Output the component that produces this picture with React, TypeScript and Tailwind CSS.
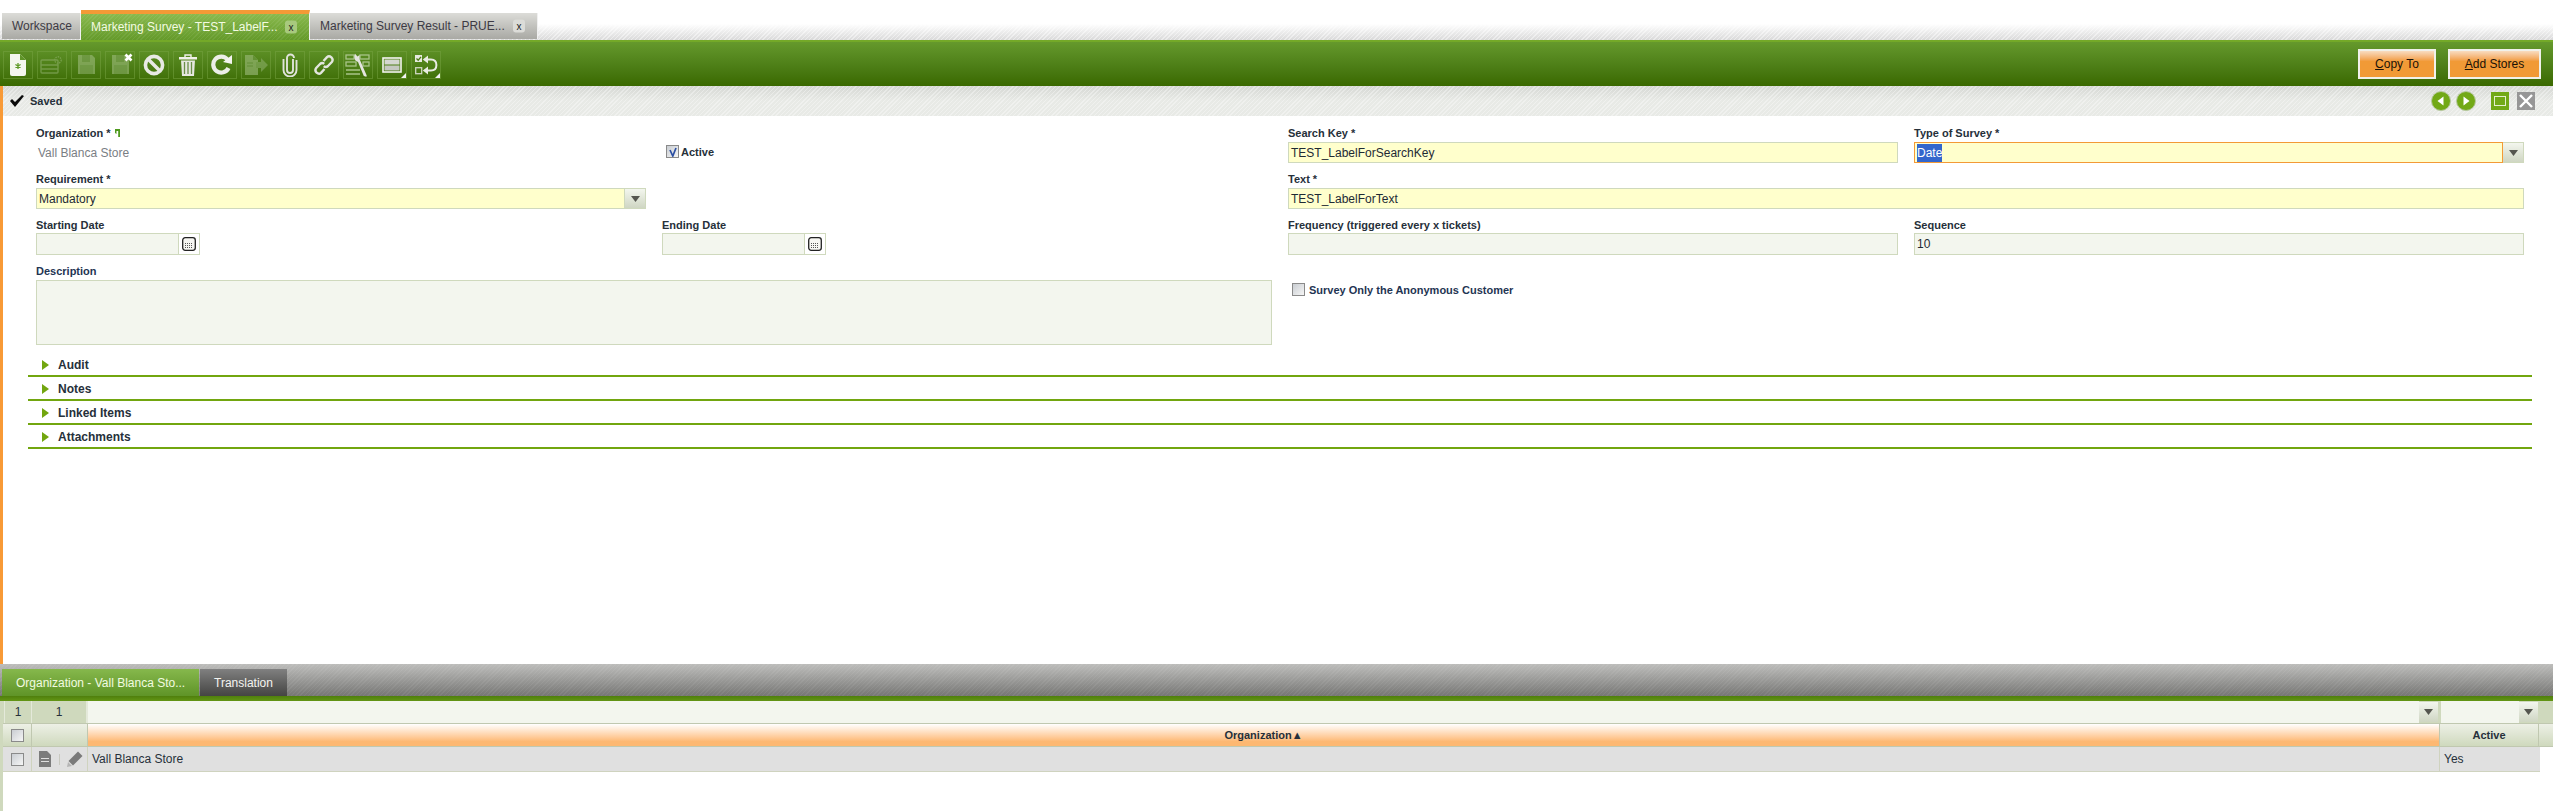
import React from "react";

function Btn({ children, corner, dim, badge }: { children: React.ReactNode; corner?: boolean; dim?: boolean; badge?: boolean }) {
  return (
    <div className="relative w-[30px] h-[28px] border border-[#78a444]/50 flex items-center justify-center">
      <div className={`w-full h-full flex items-center justify-center ${dim ? "opacity-60" : ""}`}>{children}</div>
      {badge && (
        <svg className="absolute top-[1px] right-[1px]" width="9" height="9" viewBox="0 0 9 9">
          <path d="M1.5 1.5L7.5 7.5M7.5 1.5L1.5 7.5" stroke="#fff" strokeWidth="2.6" />
        </svg>
      )}
      {corner && (
        <svg className="absolute right-0 bottom-0" width="5" height="5" viewBox="0 0 5 5">
          <path d="M5 0V5H0Z" fill="#f2f2f2" />
        </svg>
      )}
    </div>
  );
}

const Floppy = () => (
  <>
    <path d="M1 1H15L18 4V20H1Z" fill="#9dbb7c" />
    <path d="M5 1H13V8H5Z" fill="#7fa45a" />
    <path d="M3 11H16V20H3Z" fill="#88ac64" />
  </>
);

const Icons = [
  <svg key="a" width="18" height="22" viewBox="0 0 18 22"><path d="M1 0H11L17 6V20Q17 22 15 22H3Q1 22 1 20Z" fill="#f4f6ef" /><path d="M11 0V6H17Z" fill="#5f9428" /><path d="M9 9V15M6.4 10.5L11.6 13.5M11.6 10.5L6.4 13.5" stroke="#5f9a28" strokeWidth="1.3" /></svg>,
  <svg key="b" width="24" height="20" viewBox="0 0 24 20" fill="none" stroke="#8eb06a" strokeWidth="1.4"><rect x="1" y="5" width="17" height="13" rx="1" /><path d="M1 10H18M1 14H18" /><circle cx="18" cy="5" r="3.2" strokeDasharray="1.4 1" /></svg>,
  <svg key="c" width="19" height="21" viewBox="0 0 19 21"><Floppy /></svg>,
  <svg key="d" width="19" height="21" viewBox="0 0 19 21"><Floppy /></svg>,
  <svg key="e" width="22" height="22" viewBox="0 0 22 22" fill="none" stroke="#e8e9e5" strokeWidth="3.6"><circle cx="11" cy="11" r="8.6" /><path d="M5 5L17 17" /></svg>,
  <svg key="f" width="20" height="22" viewBox="0 0 20 22"><path d="M1 3H19V5.5H1Z" fill="#f0f0ea" /><path d="M7 3V1H13V3" fill="none" stroke="#f0f0ea" strokeWidth="1.4" /><path d="M3 6.5H17L16 22H4Z" fill="#e6e8e0" /><path d="M6.5 8V20M10 8V20M13.5 8V20" stroke="#6a8f48" strokeWidth="1.3" /></svg>,
  <svg key="g" width="22" height="22" viewBox="0 0 22 22"><path d="M17.5 14A8 8 0 1 1 16.5 5.5" fill="none" stroke="#eceee8" strokeWidth="4.2" /><path d="M12 8L21 1V10Z" fill="#f4f4f0" /></svg>,
  <svg key="h" width="24" height="20" viewBox="0 0 24 20"><path d="M1 0H9L14 5V20H1Z" fill="#9dbb7c" /><path d="M9 0V5H14Z" fill="#6e9a44" /><path d="M12 7H17V3L24 10L17 17V13H12Z" fill="#8bae67" /><path d="M3 8H9M3 11H9" stroke="#7fa45a" strokeWidth="1.4" /></svg>,
  <svg key="i" width="16" height="24" viewBox="0 0 16 24" fill="none" stroke="#e0e3da" strokeWidth="1.9"><path d="M11 6V17A3 3 0 0 1 5 17V5A3.5 3.5 0 0 1 12 5" /><path d="M14.5 7V17A6.5 6.5 0 0 1 1.5 17V6" /></svg>,
  <svg key="j" width="22" height="22" viewBox="0 0 22 22" fill="none" stroke="#e3e6de" strokeWidth="2.4"><path d="M10.5 7L14 3.2Q16 1.4 18.4 3.4Q20.6 5.6 18.8 8L15 12Q12.8 14 10.8 12.2" /><path d="M11.5 15L8 18.8Q6 20.6 3.6 18.6Q1.4 16.4 3.2 14L7 10Q9.2 8 11.2 9.8" /></svg>,
  <svg key="k" width="26" height="24" viewBox="0 0 26 24"><g fill="none" stroke="#a8c488" strokeWidth="1.3"><rect x="1" y="2" width="8" height="4" /><rect x="15" y="2" width="9" height="4" /><rect x="1" y="9" width="10" height="4" /><rect x="18" y="9" width="6" height="4" /></g><path d="M1 17H15M1 21H15" stroke="#a8c488" strokeWidth="1.6" /><path d="M10 0.8L12.5 3.6L14.5 2V6L21.6 22.2Q22.4 24 20.4 23.6L18.8 23L13 9L10.4 7.5Q8.4 4 10 0.8Z" fill="#e4e4e0" /></svg>,
  <svg key="l" width="20" height="16" viewBox="0 0 20 16"><rect x="1" y="1" width="18" height="14" fill="none" stroke="#f3f3f0" strokeWidth="1.6" /><rect x="2.5" y="2.5" width="15" height="5" fill="#d5d7d0" /><rect x="2.5" y="8.5" width="15" height="5" fill="#c5c8c0" /></svg>,
  <svg key="m" width="24" height="24" viewBox="0 0 24 24"><rect x="1" y="2" width="7" height="7" fill="#e6eadf" /><path d="M2.5 5.5L4.2 7.2L7 3.8" stroke="#4d7a18" strokeWidth="1.3" fill="none" /><rect x="1.7" y="14.7" width="6" height="6" fill="none" stroke="#cfd7c3" strokeWidth="1.3" /><path d="M11 6.5H17Q22.4 6.5 22.4 12T17 17.5H11" fill="none" stroke="#e8ebe3" strokeWidth="2" /><path d="M14 2.4V10.6L8.8 6.5ZM14 13.4V21.6L8.8 17.5Z" fill="#e8ebe3" /></svg>,
];

function Tab({ label, active, closable, w }: { label: string; active?: boolean; closable?: boolean; w: string }) {
  return (
    <div
      className={`${w} relative flex items-center pl-[10px] text-[12px] border-r border-[#f0f0f0] ${
        active
          ? "h-[30px] border-t-4 border-t-[#f39a36] bg-[image:repeating-linear-gradient(135deg,rgba(255,255,255,0.07)_0px,rgba(255,255,255,0.07)_1px,transparent_1px,transparent_3px),linear-gradient(to_bottom,#8aba4e,#649a2a)] text-[#f4fbe2]"
          : "h-[26px] mb-px bg-gradient-to-b from-[#dcdcd8] to-[#a9a9a4] text-[#3d3a44]"
      }`}
    >
      {label}
      {closable && (
        <span className={`absolute right-[12px] top-1/2 -translate-y-1/2 w-[12px] h-[13px] rounded-[3px] flex items-center justify-center text-[10px] leading-none text-[#222] ${active ? "bg-[#a8c97e]" : "bg-[#dcdcd8]"}`}>x</span>
      )}
    </div>
  );
}

function Label({ children, blue }: { children: React.ReactNode; blue?: boolean }) {
  return <div className={`text-[11px] font-bold leading-[14px] h-[14px] whitespace-nowrap ${blue ? "text-[#1f3553]" : "text-[#26303a]"}`}>{children}</div>;
}

function Field({ value, required, h = "h-[21px]", grow = false, focus = false }: { value?: string; required?: boolean; h?: string; grow?: boolean; focus?: boolean }) {
  return (
    <div className={`${h} ${grow ? "flex-1" : "w-full"} border ${focus ? "border-[#f39a36]" : "border-[#cfd9bd]"} ${required ? "bg-[#ffffcc]" : "bg-[#f3f6ee]"} px-[2px] flex items-center text-[12px] text-[#1e2a34] whitespace-nowrap`}>
      {focus ? <span className="bg-[#3366cc] text-white">{value}</span> : value}
    </div>
  );
}

function Arrow({ size = 20 }: { size?: number }) {
  return (
    <div className="h-full flex items-center justify-center bg-gradient-to-b from-[#f3f6ee] to-[#cfd6c3] border border-[#cfd9bd] border-l-0 shrink-0" style={{ width: size }}>
      <svg width="9" height="6" viewBox="0 0 9 6"><path d="M0 0H9L4.5 6Z" fill="#55564f" /></svg>
    </div>
  );
}

function Combo({ value, focus }: { value: string; focus?: boolean }) {
  return (
    <div className="flex h-[21px]">
      <Field value={value} required grow focus={focus} />
      <Arrow size={21} />
    </div>
  );
}

function DateField() {
  return (
    <div className="flex h-[22px] w-[164px]">
      <Field grow h="h-[22px]" />
      <div className="w-[21px] h-full border border-[#cfd9bd] border-l-0 flex items-center justify-center shrink-0">
        <svg width="14" height="14" viewBox="0 0 14 14">
          <rect x="0.7" y="0.7" width="12.6" height="12.6" rx="2.5" fill="#f6f6f2" stroke="#222" strokeWidth="1.3" />
          <path d="M3 6.5H11M3 8.5H11M3 10.5H11" stroke="#555" strokeWidth="1" strokeDasharray="1 1" />
        </svg>
      </div>
    </div>
  );
}

function Check({ checked, size = "w-[13px] h-[13px]" }: { checked?: boolean; size?: string }) {
  return (
    <div className={`${size} border border-[#8a8a8a] bg-gradient-to-br from-[#c9cdd2] to-[#f6f6f6] flex items-center justify-center shrink-0`}>
      {checked && (
        <svg width="10" height="10" viewBox="0 0 10 10"><path d="M2 3L4.8 9L8 1" stroke="#2c4fa3" strokeWidth="1.7" fill="none" /></svg>
      )}
    </div>
  );
}

function Section({ label }: { label: string }) {
  return (
    <div className="h-[24px] border-b-2 border-[#72a60f] flex items-center pl-[14px] gap-[9px]">
      <svg width="7" height="10" viewBox="0 0 7 10" className="mt-[2px]"><path d="M0 0L7 5L0 10Z" fill="#72a60f" /></svg>
      <span className="text-[12px] font-bold text-[#26303a] mt-[2px]">{label}</span>
    </div>
  );
}

function Cell({ children, className }: { children?: React.ReactNode; className: string }) {
  return <div className={`h-full flex items-center justify-center shrink-0 ${className}`}>{children}</div>;
}

export default function App() {
  return (
    <div className="w-[2553px] h-[811px] overflow-hidden bg-white flex flex-col font-['Liberation_Sans',Arial,sans-serif]">
      {/* top tabs */}
      <div className="h-[40px] shrink-0 flex items-end pl-[2px] bg-[image:repeating-linear-gradient(135deg,rgba(255,255,255,0.45)_0px,rgba(255,255,255,0.45)_1px,transparent_1px,transparent_3px),linear-gradient(to_bottom,#ffffff_60%,#d9d9d9)]">
        <Tab label="Workspace" w="w-[79px]" />
        <Tab label="Marketing Survey - TEST_LabelF..." active closable w="w-[229px]" />
        <Tab label="Marketing Survey Result - PRUE..." closable w="w-[228px]" />
      </div>

      {/* toolbar */}
      <div className="h-[46px] shrink-0 border-t-2 border-[#74a928] bg-gradient-to-b from-[#65992c] to-[#3a6900] flex items-center pl-[3px] pr-[12px]">
        <div className="flex gap-[4px] mt-[1px]">
          {Icons.map((ic, i) => (
            <Btn key={i} corner={i >= 11} badge={i === 3} dim={i === 1 || i === 2 || i === 3 || i === 7}>
              {ic}
            </Btn>
          ))}
        </div>
        <div className="ml-auto flex gap-[12px]">
          <div className="w-[78px] h-[30px] border-[2px] border-[#f1f1ea] bg-gradient-to-b from-[#f8dcc0] from-0% via-[#f19a36] via-40% to-[#f19a36] flex items-center justify-center text-[12px] text-[#1a1208]"><span><u>C</u>opy To</span></div>
          <div className="w-[93px] h-[30px] border-[2px] border-[#f1f1ea] bg-gradient-to-b from-[#f8dcc0] from-0% via-[#f19a36] via-40% to-[#f19a36] flex items-center justify-center text-[12px] text-[#1a1208]"><span><u>A</u>dd Stores</span></div>
        </div>
      </div>

      {/* main window */}
      <div className="flex-1 flex flex-col border-l-[3px] border-[#f89a36] min-h-0">
        <div className="h-[30px] shrink-0 flex items-center pl-[6px] pr-[18px] bg-[image:repeating-linear-gradient(135deg,rgba(255,255,255,0.35)_0px,rgba(255,255,255,0.35)_1px,transparent_1px,transparent_3px),linear-gradient(to_bottom,#d6d8d4,#e8eae6_50%)]">
          <svg width="16" height="14" viewBox="0 0 16 14"><path d="M1 7L6 13L15 2L13 1L6 8L3 5Z" fill="#0b0b0b" /></svg>
          <span className="ml-[5px] text-[11px] font-bold text-[#26303a]">Saved</span>
          <div className="ml-auto flex items-center">
            {["M12.5 5.5V14.5L6.5 10Z", "M7.5 5.5V14.5L13.5 10Z"].map((d, i) => (
              <svg key={i} width="20" height="20" viewBox="0 0 20 20" className={i ? "ml-[5px]" : ""}>
                <circle cx="10" cy="10" r="9.5" fill="#72a916" stroke="#b7c8a0" />
                <path d={d} fill="#fff" />
              </svg>
            ))}
            <div className="ml-[15px] w-[18px] h-[18px] bg-[#72a916] flex items-center justify-center">
              <div className="w-[12px] h-[10px] border border-[#e4efcd]" />
            </div>
            <div className="ml-[8px] w-[18px] h-[18px] bg-[#969696] flex items-center justify-center">
              <svg width="14" height="14" viewBox="0 0 14 14"><path d="M1 1L13 13M13 1L1 13" stroke="#fff" strokeWidth="2.4" /></svg>
            </div>
          </div>
        </div>

        {/* form */}
        <div className="pl-[33px] pt-[10px] grid grid-cols-[610px_610px_610px_610px] gap-x-[16px] auto-rows-min">
          <div className="h-[37px] flex flex-col">
            <div className="flex items-start gap-[4px]">
              <Label>Organization *</Label>
              <svg width="5" height="8" viewBox="0 0 5 8" className="mt-[3px]"><path d="M0 0H5V8H3.2V2H1.5V5L0 4Z" fill="#4f9a1e" /></svg>
            </div>
            <div className="pl-[2px] mt-[4px] text-[12px] text-[#7a7e84]">Vall Blanca Store</div>
          </div>
          <div className="h-[37px] flex items-start pt-[19px] pl-[4px] gap-[2px]">
            <Check checked />
            <Label>Active</Label>
          </div>
          <div className="h-[37px] flex flex-col"><div className="h-[16px]"><Label>Search Key *</Label></div><Field value="TEST_LabelForSearchKey" required /></div>
          <div className="h-[37px] flex flex-col"><div className="h-[16px]"><Label>Type of Survey *</Label></div><Combo value="Date" focus /></div>

          <div className="h-[37px] mt-[9px] flex flex-col"><div className="h-[16px]"><Label>Requirement *</Label></div><Combo value="Mandatory" /></div>
          <div className="mt-[9px]" />
          <div className="col-span-2 h-[37px] mt-[9px] flex flex-col"><div className="h-[16px]"><Label>Text *</Label></div><Field value="TEST_LabelForText" required /></div>

          <div className="h-[37px] mt-[9px] flex flex-col"><div className="h-[15px]"><Label>Starting Date</Label></div><DateField /></div>
          <div className="h-[37px] mt-[9px] flex flex-col"><div className="h-[15px]"><Label>Ending Date</Label></div><DateField /></div>
          <div className="h-[37px] mt-[9px] flex flex-col"><div className="h-[15px]"><Label>Frequency (triggered every x tickets)</Label></div><Field h="h-[22px]" /></div>
          <div className="h-[37px] mt-[9px] flex flex-col"><div className="h-[15px]"><Label>Sequence</Label></div><Field h="h-[22px]" value="10" /></div>

          <div className="col-span-2 h-[81px] mt-[9px] flex flex-col"><div className="h-[16px]"><Label blue>Description</Label></div><Field h="h-[66px]" /></div>
          <div className="col-span-2 mt-[28px] flex items-start pl-[4px] gap-[4px]">
            <Check />
            <Label blue>Survey Only the Anonymous Customer</Label>
          </div>
        </div>

        {/* sections */}
        <div className="ml-[25px] w-[2504px] mt-[8px]">
          <Section label="Audit" />
          <Section label="Notes" />
          <Section label="Linked Items" />
          <Section label="Attachments" />
        </div>
      </div>

      {/* bottom panel */}
      <div className="h-[147px] shrink-0 flex flex-col">
        <div className="h-[32px] shrink-0 flex items-end pl-[2px] gap-px bg-[image:repeating-linear-gradient(135deg,rgba(255,255,255,0.06)_0px,rgba(255,255,255,0.06)_1px,transparent_1px,transparent_3px),linear-gradient(to_bottom,#bdbdbb,#767674)]">
          <div className="w-[197px] h-[27px] bg-gradient-to-b from-[#86b84c] to-[#5f9427] flex items-center pl-[14px] text-[12px] text-[#f2fbe0]">Organization - Vall Blanca Sto...</div>
          <div className="w-[87px] h-[27px] bg-gradient-to-b from-[#808080] to-[#454543] flex items-center pl-[14px] text-[12px] text-[#f4f4f0]">Translation</div>
        </div>
        <div className="h-[5px] shrink-0 bg-gradient-to-b from-[#4f7f0c] to-[#639615]" />
        <div className="flex-1 border-l-[3px] border-[#cfd9bd]">
          <div className="h-[23px] flex border-b border-[#c0c8b0] bg-[#cfd9bd]">
            <Cell className="w-[28px] border-x border-[#e4e9da] text-[12px] text-[#26303a] ml-px">1</Cell>
            <Cell className="w-[56px] border-r-2 border-[#e4e9da] text-[12px] text-[#26303a]">1</Cell>
            <div className="w-[2351px] flex h-full bg-[#f3f6ee]"><div className="flex-1" /><Arrow size={20} /></div>
            <div className="w-[98px] ml-[2px] flex h-full bg-[#f3f6ee]"><div className="flex-1" /><Arrow size={20} /></div>
          </div>
          <div className="h-[23px] flex bg-gradient-to-b from-[#edf0e6] to-[#cfd9bd] border-b border-[#c0c8b0]">
            <Cell className="w-[28px] border-r border-[#c0c8b0] ml-px"><Check /></Cell>
            <Cell className="w-[56px] border-r border-[#c0c8b0]" />
            <div className="w-[2351px] h-full bg-gradient-to-b from-white to-[#fdb872] to-80% flex items-center justify-center text-[11px] font-bold text-[#26303a]">Organization▲</div>
            <div className="w-[100px] h-full border-x border-[#c0c8b0] flex items-center justify-center text-[11px] font-bold text-[#26303a]">Active</div>
          </div>
          <div className="h-[25px] w-[2537px] flex bg-[#e0e0e0] border-b border-[#cfd3bf]">
            <Cell className="w-[28px] border-r border-[#cfd3bf] ml-px"><Check /></Cell>
            <Cell className="w-[56px] border-r border-[#cfd3bf] gap-[7px] pl-[2px]">
              <svg width="14" height="16" viewBox="0 0 14 16"><path d="M1 0H9L13 4V16H1Z" fill="#7c7c7c" /><path d="M3 7.5H11M3 10.5H11" stroke="#e0e0e0" strokeWidth="1.2" /></svg>
              <div className="w-px h-[11px] bg-[#c9c9c0]" />
              <svg width="16" height="16" viewBox="0 0 16 16"><path d="M11 0.5L15.5 5L6 14.5L1.5 10Z" fill="#7a7a7a" /><path d="M1 11L5 15L0 16Z" fill="#b5b5b5" /></svg>
            </Cell>
            <div className="w-[2351px] h-full flex items-center pl-[4px] text-[12px] text-[#26303a]">Vall Blanca Store</div>
            <div className="flex-1 h-full border-l border-[#cfd3bf] flex items-center pl-[4px] text-[12px] text-[#26303a]">Yes</div>
          </div>
        </div>
      </div>
    </div>
  );
}
